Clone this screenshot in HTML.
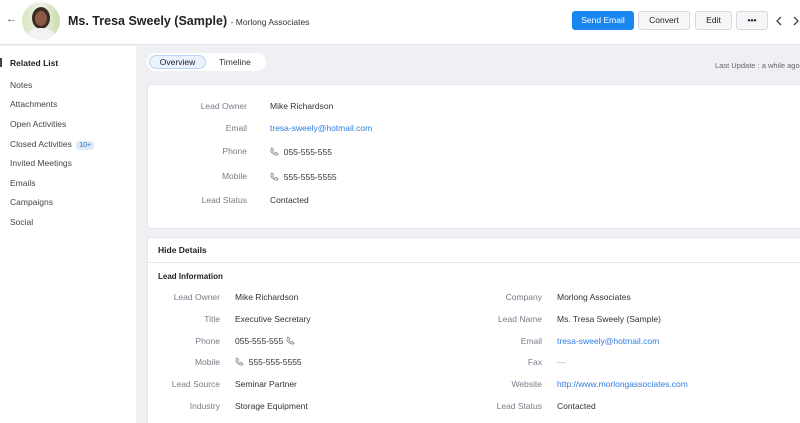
<!DOCTYPE html>
<html style="width:800px;height:423px;overflow:hidden"><head><style>
*{margin:0;padding:0;box-sizing:border-box}
body{width:800px;height:423px;overflow:hidden;font-family:"Liberation Sans",sans-serif;background:#eef0f4;position:relative;color:#333}
.a{position:absolute;white-space:nowrap}
.hdr{left:0;top:0;width:800px;height:45px;background:#fff;border-bottom:1px solid #e3e5ea}
.side{left:0;top:46px;width:136px;height:377px;background:#fff}
.card{background:#fff;border:1px solid #e3e5ea;border-radius:4px}
.lbl{font-size:8.5px;color:#777d88;text-align:right}
.val{font-size:8.5px;color:#333}
.lnk{font-size:8.5px;color:#2f7de1}
.btn{top:11px;height:19px;border:1px solid #d6d9de;border-radius:3px;background:#f5f6f8;font-size:8.5px;text-align:center;line-height:17px;color:#222}
.sl{left:10px;font-size:8.5px;color:#444}
.ph{display:inline-block;width:9px;height:9px;vertical-align:-1px}
</style></head><body>
<div class="a hdr"></div>
<div class="a" style="left:6px;top:13px;font-size:11px;color:#555">←</div>
<div class="a" style="left:22px;top:2px;width:38px;height:38px;border-radius:50%;overflow:hidden;background:linear-gradient(90deg,#d8e6c0,#eef2e4 50%,#c9dcae)">
<div class="a" style="left:10px;top:5px;width:18px;height:22px;border-radius:50%;background:#3a2a24"></div>
<div class="a" style="left:13px;top:9px;width:12px;height:15px;border-radius:50%;background:#8a5a44"></div>
<div class="a" style="left:5px;top:26px;width:28px;height:16px;border-radius:50% 50% 0 0;background:#f1f3f5"></div>
</div>
<div class="a" style="left:68px;top:14px;font-size:12.5px;font-weight:bold;color:#222">Ms. Tresa Sweely (Sample) <span style="font-size:8.5px;font-weight:normal;color:#333">- Morlong Associates</span></div>
<div class="a btn" style="left:572px;width:62px;background:#1a86f0;border-color:#1a86f0;color:#fff">Send Email</div>
<div class="a btn" style="left:638px;width:52px">Convert</div>
<div class="a btn" style="left:695px;width:37px">Edit</div>
<div class="a btn" style="left:736px;width:32px;font-weight:bold">•••</div>
<svg class="a" style="left:775px;top:16px" width="8" height="10"><path d="M6 1 L2 5 L6 9" stroke="#444" stroke-width="1.3" fill="none"/></svg>
<svg class="a" style="left:792px;top:16px" width="8" height="10"><path d="M2 1 L6 5 L2 9" stroke="#444" stroke-width="1.3" fill="none"/></svg>
<div class="a side"></div>
<div class="a" style="left:0;top:58px;width:2px;height:9px;background:#444"></div>
<div class="a" style="left:10px;top:58px;font-size:8.5px;font-weight:bold;color:#222">Related List</div>
<div class="a sl" style="top:80px">Notes</div>
<div class="a sl" style="top:99px">Attachments</div>
<div class="a sl" style="top:119px">Open Activities</div>
<div class="a sl" style="top:139px">Closed Activities <span style="background:#dceafb;color:#2f6fc0;font-size:7px;padding:1px 3px;border-radius:3px;margin-left:2px">10+</span></div>
<div class="a sl" style="top:158px">Invited Meetings</div>
<div class="a sl" style="top:178px">Emails</div>
<div class="a sl" style="top:197px">Campaigns</div>
<div class="a sl" style="top:217px">Social</div>
<div class="a" style="left:147px;top:53px;width:119px;height:18px;background:#fff;border-radius:9px"></div>
<div class="a" style="left:149px;top:55px;width:57px;height:14px;background:#eaf2fd;border:1px solid #b8d3f4;border-radius:7px;font-size:8.5px;text-align:center;line-height:12px;color:#222">Overview</div>
<div class="a" style="left:219px;top:57px;font-size:8.5px;color:#333">Timeline</div>
<div class="a" style="left:715px;top:61px;font-size:7.5px;color:#666">Last Update : a while ago</div>
<div class="a card" style="left:147px;top:84px;width:656px;height:145px"></div>
<div class="a lbl" style="left:150px;width:97px;top:101px">Lead Owner</div><div class="a val" style="left:270px;top:101px">Mike Richardson</div>
<div class="a lbl" style="left:150px;width:97px;top:123px">Email</div><div class="a lnk" style="left:270px;top:123px">tresa-sweely@hotmail.com</div>
<div class="a lbl" style="left:150px;width:97px;top:146px">Phone</div><div class="a val" style="left:270px;top:147px"><svg class="ph" viewBox="0 0 10 10"><path d="M2 1 L4 3 L3 4.5 Q5 7 5.5 7 L7 6 L9 8 L8 9 Q4 9 1 5 Q1 2 2 1Z" stroke="#777" stroke-width=".8" fill="none"/></svg>&nbsp; 055-555-555</div>
<div class="a lbl" style="left:150px;width:97px;top:171px">Mobile</div><div class="a val" style="left:270px;top:172px"><svg class="ph" viewBox="0 0 10 10"><path d="M2 1 L4 3 L3 4.5 Q5 7 5.5 7 L7 6 L9 8 L8 9 Q4 9 1 5 Q1 2 2 1Z" stroke="#777" stroke-width=".8" fill="none"/></svg>&nbsp; 555-555-5555</div>
<div class="a lbl" style="left:150px;width:97px;top:195px">Lead Status</div><div class="a val" style="left:270px;top:195px">Contacted</div>
<div class="a card" style="left:147px;top:237px;width:656px;height:190px"></div>
<div class="a" style="left:148px;top:262px;width:652px;height:1px;background:#e3e5ea"></div>
<div class="a" style="left:158px;top:245px;font-size:8.5px;font-weight:bold;color:#222">Hide Details</div>
<div class="a" style="left:158px;top:272px;font-size:8px;font-weight:bold;color:#222">Lead Information</div>
<div class="a lbl" style="left:150px;width:70px;top:292px">Lead Owner</div><div class="a val" style="left:235px;top:292px">Mike Richardson</div>
<div class="a lbl" style="left:150px;width:70px;top:314px">Title</div><div class="a val" style="left:235px;top:314px">Executive Secretary</div>
<div class="a lbl" style="left:150px;width:70px;top:336px">Phone</div><div class="a val" style="left:235px;top:336px">055-555-555 <svg class="ph" viewBox="0 0 10 10"><path d="M2 1 L4 3 L3 4.5 Q5 7 5.5 7 L7 6 L9 8 L8 9 Q4 9 1 5 Q1 2 2 1Z" stroke="#777" stroke-width=".8" fill="none"/></svg></div>
<div class="a lbl" style="left:150px;width:70px;top:357px">Mobile</div><div class="a val" style="left:235px;top:357px"><svg class="ph" viewBox="0 0 10 10"><path d="M2 1 L4 3 L3 4.5 Q5 7 5.5 7 L7 6 L9 8 L8 9 Q4 9 1 5 Q1 2 2 1Z" stroke="#777" stroke-width=".8" fill="none"/></svg>&nbsp; 555-555-5555</div>
<div class="a lbl" style="left:150px;width:70px;top:379px">Lead Source</div><div class="a val" style="left:235px;top:379px">Seminar Partner</div>
<div class="a lbl" style="left:150px;width:70px;top:401px">Industry</div><div class="a val" style="left:235px;top:401px">Storage Equipment</div>
<div class="a lbl" style="left:470px;width:72px;top:292px">Company</div><div class="a val" style="left:557px;top:292px">Morlong Associates</div>
<div class="a lbl" style="left:470px;width:72px;top:314px">Lead Name</div><div class="a val" style="left:557px;top:314px">Ms. Tresa Sweely (Sample)</div>
<div class="a lbl" style="left:470px;width:72px;top:336px">Email</div><div class="a lnk" style="left:557px;top:336px">tresa-sweely@hotmail.com</div>
<div class="a lbl" style="left:470px;width:72px;top:357px">Fax</div><div class="a val" style="left:557px;top:357px;color:#aaa">—</div>
<div class="a lbl" style="left:470px;width:72px;top:379px">Website</div><div class="a lnk" style="left:557px;top:379px">http://www.morlongassociates.com</div>
<div class="a lbl" style="left:470px;width:72px;top:401px">Lead Status</div><div class="a val" style="left:557px;top:401px">Contacted</div>
</body></html>
